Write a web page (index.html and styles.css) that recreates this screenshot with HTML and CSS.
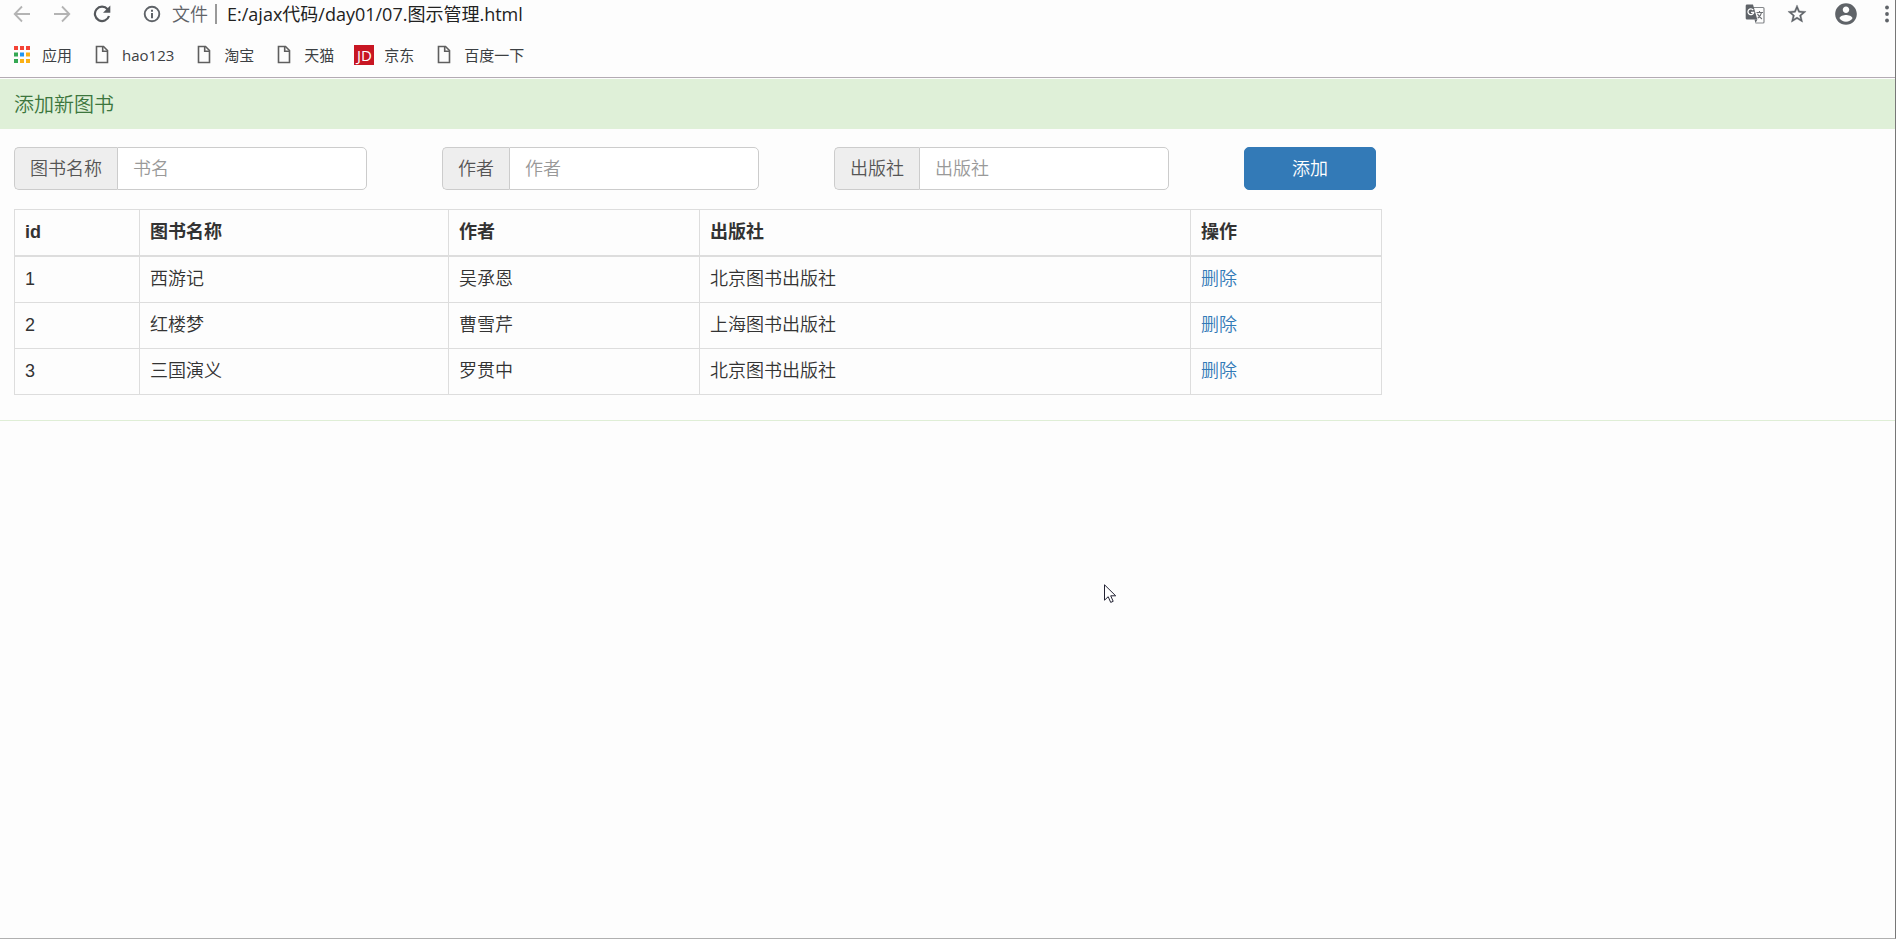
FILE: index.html
```html
<!DOCTYPE html>
<html lang="zh-CN">
<head>
    <meta charset="UTF-8">
    <title>图书管理</title>
    <link rel="stylesheet" href="styles.css">
</head>
<body>
    <svg class="defs" width="0" height="0">
        <symbol id="file" viewBox="0 0 20 20">
            <path d="M4.5 1.5h7l4 4v12h-11z" fill="none" stroke="#5f5f5f" stroke-width="1.6"/>
            <path d="M10.7 1.5v4.8h4.8" fill="none" stroke="#5f5f5f" stroke-width="1.6"/>
        </symbol>
    </svg>

    <header class="browser">
        <div class="toolbar">
            <button class="tool" aria-label="后退">
                <svg width="18" height="18" viewBox="0 0 18 18" fill="none" stroke="#b4b4b4" stroke-width="1.8"><path d="M17 9H2M9 1.500L1.700 9L9 16.500"/></svg>
            </button>
            <button class="tool" aria-label="前进">
                <svg width="18" height="18" viewBox="0 0 18 18" fill="none" stroke="#b4b4b4" stroke-width="1.8"><path d="M1 9h15M9 1.500L16.300 9L9 16.500"/></svg>
            </button>
            <button class="tool" aria-label="刷新">
                <svg width="18" height="18" viewBox="0 0 18 18"><path d="M14.600 4.200A7.200 7.200 0 1 0 16 11" fill="none" stroke="#55585c" stroke-width="2.200"/><path d="M17.300 0.500v7.300H10z" fill="#55585c"/></svg>
            </button>
            <div class="address">
                <svg width="18" height="18" viewBox="0 0 18 18"><circle cx="9" cy="9" r="7.300" fill="none" stroke="#5f6368" stroke-width="1.900"/><path d="M8 8h2v5.200H8zM8 4.800h2v2H8z" fill="#5f6368"/></svg>
                <label class="scheme" for="url">文件</label>
                <input class="url" id="url" type="text" value="E:/ajax代码/day01/07.图示管理.html">
            </div>
            <button class="tool" aria-label="翻译">
                <svg width="20" height="20" viewBox="0 0 20 20"><path d="M8 3.500h10a1 1 0 0 1 1 1V18a1 1 0 0 1-1 1h-7.500" fill="none" stroke="#85888b" stroke-width="1.200"/><path d="M2 .5h6l4.300 15H2a1.300 1.300 0 0 1-1.300-1.300V1.800A1.300 1.300 0 0 1 2 .5z" fill="#5f6368"/><path d="M9.500 15.500h3L10.500 19z" fill="#5f6368"/><path d="M8.200 6A2.900 2.900 0 1 0 8.700 8.300H6" fill="none" stroke="#fff" stroke-width="1.300"/><path d="M11.500 8.500H18M14.500 7v1.500M16.500 8.700c-.5 2.500-2 4.300-3.800 5.600M12.500 9.800c1 2.300 2.500 4 4.500 5.200" fill="none" stroke="#6b6e72" stroke-width="1.100"/></svg>
            </button>
            <button class="tool" aria-label="收藏">
                <svg width="20" height="20" viewBox="1 1 22 22" fill="#5f6368" stroke="#5f6368" stroke-width=".4"><path d="M22 9.240l-7.190-.620L12 2 9.190 8.630 2 9.240l5.460 4.730L5.820 21 12 17.270 18.180 21l-1.630-7.030L22 9.240zM12 15.400l-3.760 2.270 1-4.280-3.320-2.880 4.380-.380L12 6.100l1.710 4.040 4.380.380-3.320 2.880 1 4.280L12 15.400z"/></svg>
            </button>
            <button class="tool user" aria-label="用户">
                <svg width="26" height="26" viewBox="0 0 24 24" fill="#5f6368"><path d="M12 2C6.480 2 2 6.480 2 12s4.480 10 10 10 10-4.480 10-10S17.520 2 12 2zm0 3c1.660 0 3 1.340 3 3s-1.340 3-3 3-3-1.340-3-3 1.340-3 3-3zm0 14.200c-2.500 0-4.710-1.280-6-3.220.030-1.990 4-3.080 6-3.080 1.990 0 5.970 1.090 6 3.080-1.290 1.940-3.500 3.220-6 3.220z"/></svg>
            </button>
            <button class="tool" aria-label="菜单">
                <svg width="4" height="18" viewBox="0 0 4 18" fill="#5f6368"><circle cx="2" cy="2.500" r="1.900"/><circle cx="2" cy="9" r="1.900"/><circle cx="2" cy="15.500" r="1.900"/></svg>
            </button>
        </div>
        <nav class="bookmarks">
            <a href="#">
                <svg width="20" height="20" viewBox="0 0 20 20"><path d="M2 1h4v4H2zM8 1h4v4H8zM14 1h4v4h-4z" fill="#f44336"/><path d="M2 7.500h4v4H2zM2 14h4v4H2z" fill="#34a853"/><path d="M8 7.500h4v4H8z" fill="#2196f3"/><path d="M14 7.500h4v4h-4zM8 14h4v4H8zM14 14h4v4h-4z" fill="#fbb116"/></svg>
                应用
            </a>
            <a href="#"><svg width="20" height="20"><use href="#file"/></svg>hao123</a>
            <a href="#"><svg width="20" height="20"><use href="#file"/></svg>淘宝</a>
            <a href="#"><svg width="20" height="20"><use href="#file"/></svg>天猫</a>
            <a href="#"><span class="jd">JD</span>京东</a>
            <a href="#"><svg width="20" height="20"><use href="#file"/></svg>百度一下</a>
        </nav>
    </header>

    <div class="panel">
        <h3 class="panel-heading">添加新图书</h3>
        <div class="panel-body">
            <form class="form-inline">
                <div class="input-group">
                    <label class="input-group-addon" for="iptBookname">图书名称</label>
                    <input class="form-control" id="iptBookname" type="text" placeholder="书名">
                </div>
                <div class="input-group">
                    <label class="input-group-addon" for="iptAuthor">作者</label>
                    <input class="form-control" id="iptAuthor" type="text" placeholder="作者">
                </div>
                <div class="input-group">
                    <label class="input-group-addon" for="iptPublisher">出版社</label>
                    <input class="form-control" id="iptPublisher" type="text" placeholder="出版社">
                </div>
                <button class="btn" id="btnAdd" type="button">添加</button>
            </form>

            <table class="table">
                <colgroup>
                    <col class="col-id">
                    <col class="col-name">
                    <col class="col-author">
                    <col class="col-publisher">
                    <col>
                </colgroup>
                <thead>
                    <tr><th>id</th><th>图书名称</th><th>作者</th><th>出版社</th><th>操作</th></tr>
                </thead>
                <tbody id="tb">
                    <tr><td>1</td><td>西游记</td><td>吴承恩</td><td>北京图书出版社</td><td><a href="#">删除</a></td></tr>
                    <tr><td>2</td><td>红楼梦</td><td>曹雪芹</td><td>上海图书出版社</td><td><a href="#">删除</a></td></tr>
                    <tr><td>3</td><td>三国演义</td><td>罗贯中</td><td>北京图书出版社</td><td><a href="#">删除</a></td></tr>
                </tbody>
            </table>
        </div>
    </div>

    <svg class="pointer" width="14" height="20" viewBox="0 0 14 20"><path d="M.5 .8v15.400l3.700-3.500 2.500 5.700 2.500-1.100-2.500-5.500h5z" fill="#fff" stroke="#223" stroke-width="1"/></svg>
</body>
</html>
```
FILE: styles.css
```css
* {
    box-sizing: border-box;
}
body {
    margin: 0;
    min-height: 100vh;
    background: #fdfdfd;
    border-right: 1px solid #777;
    border-bottom: 1px solid #b0b0b0;
    color: #333;
    font-family: "Liberation Sans", "Noto Sans CJK SC", sans-serif;
    font-size: 18px;
    font-weight: 350;
    line-height: 26px;
}
a {
    color: #337ab7;
    text-decoration: none;
}
input, button {
    font: inherit;
}
svg {
    display: block;
    flex: none;
}
.defs {
    position: absolute;
}

/* browser bar */
.browser {
    border-bottom: 1px solid #b3abb3;
    margin-bottom: 1px;
    font-family: "Open Sans", "Noto Sans CJK SC", sans-serif;
    font-weight: normal;
}
.toolbar {
    display: flex;
    align-items: center;
    gap: 22px;
    height: 28px;
    padding: 0 6px 0 13px;
}
.tool {
    display: flex;
    padding: 0;
    border: 0;
    background: none;
}
.user {
    margin: 0 4px;
}
.address {
    display: flex;
    align-items: center;
    flex: 1;
    margin-left: 10px;
}
.scheme {
    margin-left: 11px;
    padding-right: 7px;
    border-right: 2px solid #999;
    color: #5f6368;
    font-size: 18px;
    font-weight: 350;
    line-height: 20px;
}
.url {
    flex: 1;
    height: 26px;
    padding: 0 0 0 10px;
    border: 0;
    background: none;
    color: #222;
    font-size: 18px;
}
.bookmarks {
    display: flex;
    align-items: center;
    gap: 20px;
    height: 49px;
    padding: 4px 12px 0;
}
.bookmarks a {
    display: flex;
    align-items: center;
    gap: 10px;
    color: #3c4043;
    font-size: 15px;
}
.jd {
    width: 20px;
    background: #c81623;
    color: #fff;
    line-height: 20px;
    text-align: center;
}

/* book panel */
.panel {
    border-bottom: 1px solid #dfeed6;
}
.panel-heading {
    margin: 0;
    padding: 13px 14px 11px;
    background: #dff0d8;
    color: #3c763d;
    font-size: 20px;
    font-weight: 350;
    line-height: 26px;
}
.panel-body {
    padding: 18px 14px 25px;
}
.form-inline {
    display: flex;
    flex-wrap: wrap;
    gap: 18px 75px;
    margin-bottom: 19px;
}
.input-group {
    display: flex;
}
.input-group-addon {
    padding: 8px 15px 6px;
    border: 1px solid #ccc;
    border-right: 0;
    border-radius: 5px 0 0 5px;
    background: #eee;
    color: #555;
}
.form-control {
    width: 250px;
    height: 43px;
    padding: 8px 15px 6px;
    border: 1px solid #ccc;
    border-radius: 0 5px 5px 0;
    background: #fff;
    color: #555;
}
.form-control::placeholder {
    color: #999;
}
.btn {
    width: 132px;
    height: 43px;
    border: 1px solid #337ab7;
    border-radius: 5px;
    background: #337ab7;
    color: #fff;
}
.table {
    width: 100%;
    max-width: 1368px;
    border-collapse: collapse;
    table-layout: fixed;
}
.table th, .table td {
    height: 46px;
    padding: 9px 10px 10px;
    border: 1px solid #ddd;
    text-align: left;
}
.table th {
    border-bottom-width: 2px;
}
.col-id {
    width: 125px;
}
.col-name {
    width: 309px;
}
.col-author {
    width: 251px;
}
.col-publisher {
    width: 491px;
}

/* mouse pointer */
.pointer {
    position: absolute;
    left: 1104px;
    top: 584px;
}
```
